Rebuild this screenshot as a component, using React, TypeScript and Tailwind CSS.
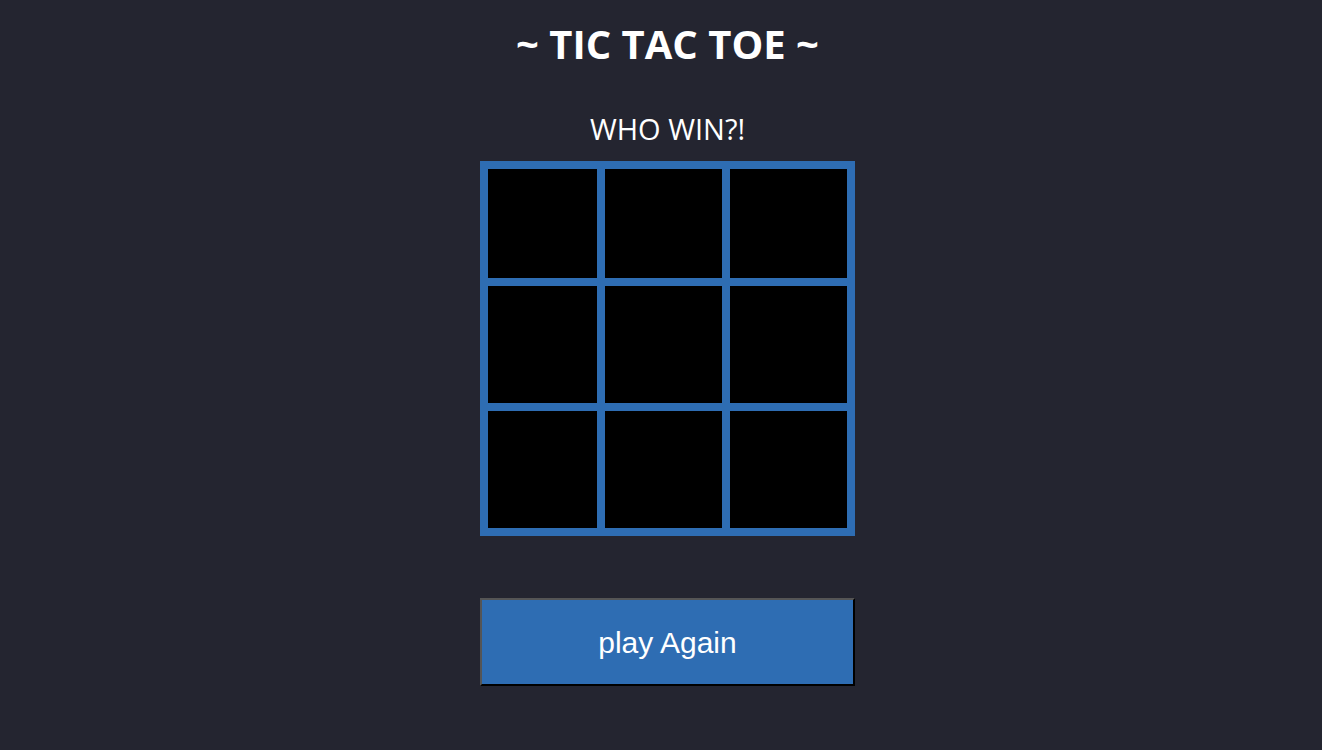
export default function App() {
  const cols = ["w-[109px]", "w-[117px]", "w-[117px]"];
  const rows = ["h-[109px]", "h-[117px]", "h-[117px]"];
  return (
    <div className="min-h-[750px] w-full bg-[#242530] flex flex-col items-center pl-[13px]" style={{ fontFamily: '"Open Sans", "Noto Sans", sans-serif' }}>
      <h1 className="mt-[20px] h-[48px] leading-[48px] text-[40px] font-bold text-white">~ TIC TAC TOE ~</h1>
      <div className="mt-[46px] h-[30px] leading-[30px] text-[29px] text-white">WHO WIN?!</div>
      <div className="mt-[17px] bg-[#2e6db3] p-[8px] flex flex-col gap-[8px]">
        {rows.map((r, i) => (
          <div key={i} className="flex gap-[8px]">
            {cols.map((c, j) => (
              <div key={j} className={`${c} ${r} bg-black`} />
            ))}
          </div>
        ))}
      </div>
      <button
        className="mt-[62px] w-[375px] h-[88px] bg-[#2e6db3] text-white text-[30px] border-2 border-t-[#555] border-l-[#555] border-b-black border-r-black"
        style={{ fontFamily: '"Liberation Sans", Arial, sans-serif' }}
      >
        play Again
      </button>
    </div>
  );
}
